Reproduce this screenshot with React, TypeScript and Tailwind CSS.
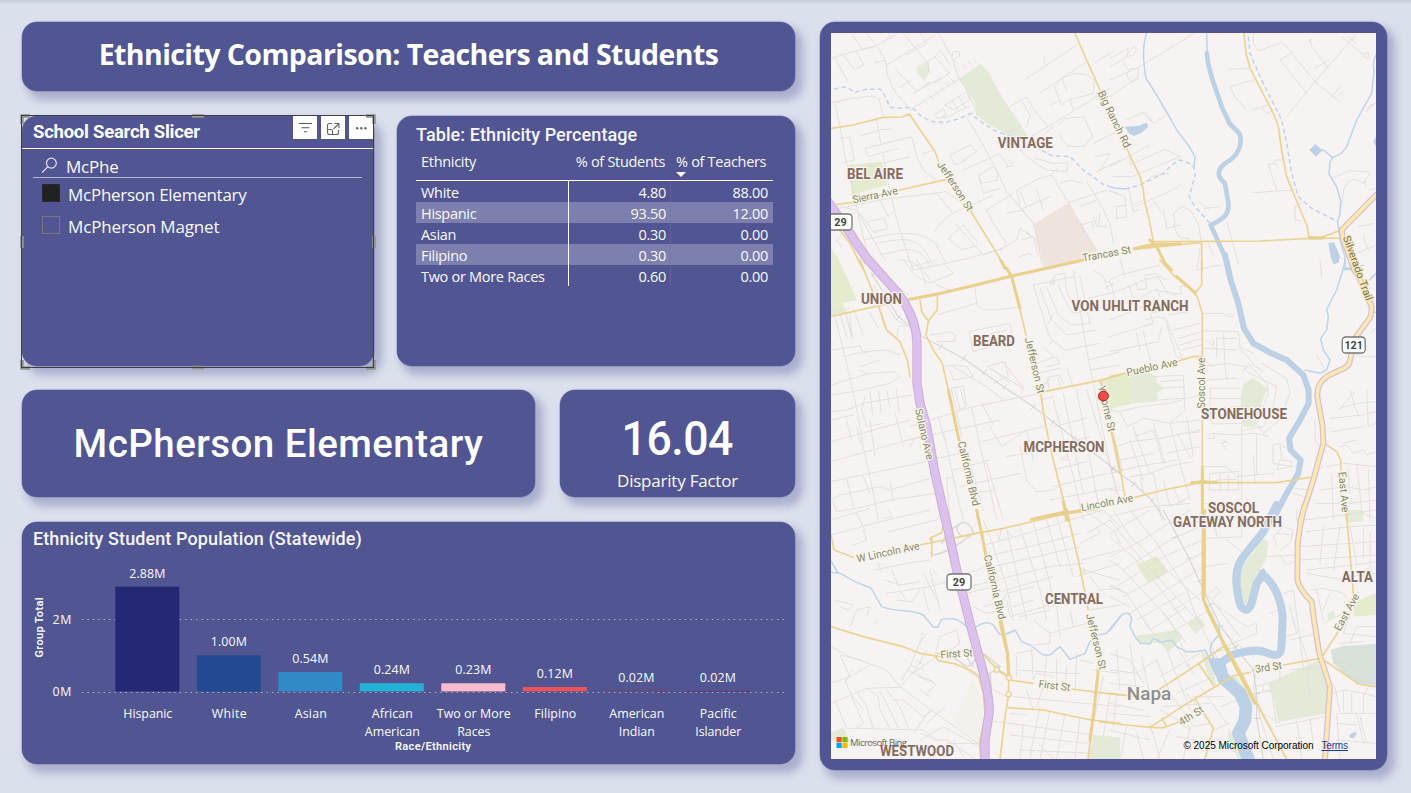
import React from "react";

type TileId = "a" | "b" | "c" | "d" | "e" | "f";
type Tiles = Partial<Record<TileId, string>>;

const ORIGIN: Record<TileId, [number, number]> = {
  a: [820, 10],
  b: [1110, 10],
  c: [820, 260],
  d: [1110, 260],
  e: [820, 510],
  f: [1110, 510],
};

function Layer({ tiles, fill = "none", stroke = "none", width = 0, dash, cap = "round" }: {
  tiles: Tiles; fill?: string; stroke?: string; width?: number; dash?: string; cap?: "round" | "butt";
}) {
  return (
    <g fill={fill} stroke={stroke} strokeWidth={width} strokeDasharray={dash} strokeLinecap={cap} strokeLinejoin="round">
      {(Object.keys(tiles) as TileId[]).map((k) => (
        <path key={k} d={tiles[k]} transform={`translate(${ORIGIN[k][0]} ${ORIGIN[k][1]}) scale(0.33333)`} />
      ))}
    </g>
  );
}

const parks: Tiles = {
  a: "M287 180L327 155L329 180L313 213Z M418 206L480 162L505 185L535 240L565 290L600 340L625 385L580 380L520 352L468 315L465 275L440 240Z M150 725L182 770L170 765Z",
  c: "M686 66L705 57V75H690Z",
  d: "M60 342L115 335L138 350L140 370L162 385L140 400L145 424L70 430Z M430 355L472 385L455 430L435 502L395 498L392 410L400 370Z M710 760L750 752L760 780H712Z",
  e: "M33 668L70 653L90 695L75 700L33 690Z M820 675L900 682V747H808Z M785 175h12v15h-12z",
  f: "M710 0H760V32L712 38Z M455 85L475 95L470 145L450 180L410 282L395 275L385 250L388 200L400 160L430 130Z M75 378L200 360L218 385L175 425L150 400L90 398Z M233 340L265 318L285 345L255 372Z M480 515L640 445L660 500L655 610L505 635Z M652 310L672 303L675 322L655 330Z M0 680L32 683L25 747H0Z M270 420L300 440L320 530L305 520L285 470Z M375 495L435 580L415 575L350 520Z M355 650L370 680L405 747H385L355 690Z M225 465L240 460L238 475Z",
};
const meadows: Tiles = {
  a: "M85 465L185 455L202 525L95 555Z M33 715L55 745L72 780H33Z",
  c: "M33 -35L75 40L110 120L68 130L75 158L33 168Z M840 360L900 345V440L870 448Z",
  d: "M-30 360L60 340L70 430L-5 447Z",
  f: "M78 165L140 137L175 185L115 220Z M730 320L735 275L798 250V315Z",
};
const campus: Tiles = { a: "M640 643L747 578L832 722L675 778Z", c: "M665 -5L830 -28L760 5L675 25Z" };
const cemetery: Tiles = { f: "M662 420L700 408L798 402V525L745 520L700 490L670 460Z" };
const industrial: Tiles = { e: "M462 500L485 580L495 650L480 700L402 635L405 620Z", f: "M745 180L798 165V222L745 210Z" };

const minor: Tiles = {
  a: `M33 145L100 125L168 108L230 72 M95 70L127 118L168 108 M72 137L103 178L132 165L108 123 M45 145L82 213 M140 70L172 110L195 150L203 195L222 240L270 300 M200 165L250 135L345 75 M205 70L215 85L200 85 M250 70L320 155L329 190 M300 70L322 100L260 135 M355 70L395 140L418 206L440 240L468 300L440 325L470 370L530 480L560 545L640 640L668 770
      M395 140L400 125L418 125L418 138L400 150L415 162 M270 300L350 250L418 206 M225 175L290 245L330 215 M288 175L345 140L388 190L340 220 M240 232L275 210 M280 250L360 205 M345 140L362 120L390 165 M290 280l14 12m4-25l14 12m4-23l14 12m4-24l14 12m3-24l12 12m4-24l14 12m3-24l12 12m3-24l12 12 M165 158L195 150
      M430 165l12 12m4-22l10 12m4-20l10 12 M345 315L370 295L380 315L355 325Z M375 285L440 245L450 270L400 300L375 285M395 270l20 30m0-42l22 35 M350 325L385 322L420 300L450 290
      M45 275L100 265L160 258L178 268L190 320 M33 278L62 276 M45 285L60 345L75 440L100 540L120 640L155 780 M58 385L90 382L103 450L62 460 M120 378L180 360L215 357 M135 415L275 380L290 440L310 480L350 510 M135 415L145 440L235 415 M190 435L205 520L225 610L265 740 M145 470L270 440 M170 330L182 400 M310 430L345 420
      M390 435L450 405L470 425L430 450 M390 435L405 465L440 450 M475 495L520 470L532 485V510L485 520L475 495L490 550L540 535 M430 480L540 430L565 470L555 475 M565 450c15 5 20 20 0 20L555 455
      M33 600L180 570L380 545L425 580 M180 570L205 620L220 605 M345 550L360 560L395 605 M140 635L190 625L205 655L160 665 M120 610L160 665L170 670 M33 585L110 600L160 690L195 750 M130 690L200 675C260 665 320 670 350 705L375 755 M180 735L250 720C290 715 315 730 330 770 M165 700L230 690C280 685 310 700 335 760 M265 740L280 780L355 765L445 745L550 715 M345 665C370 620 410 600 445 590L520 555 M385 685L430 645L470 695M385 685L425 720L470 707 M405 640L490 735L545 715 M500 600L580 550 M500 600L520 640L560 700
      M570 290L620 262L650 310L680 345 M600 265L630 315L620 350 M625 385L700 340L870 235 M550 375L600 350 M618 207L770 105 M670 140c10 5 0 15 5 22 M658 250L800 155 M703 230L725 205L765 190L800 195L822 210L820 250L745 270L725 285L703 230M725 205L740 240M750 270L760 300 M690 285L720 270 M715 345L735 325L790 320L818 380L790 410L745 408L730 395L718 370 M828 155L880 125 M820 400L900 360 M825 440L870 430L845 475L830 485L900 450
      M600 420L640 400L700 350 M600 420L640 455L680 480L740 485L745 458L700 460L645 445 M590 540L660 505L695 495L710 475 M695 495L745 578L830 725 M600 545L620 590L610 595L690 560M650 540L670 600 M720 520L750 510L790 520 M800 515L840 580L870 640L880 700 M745 578L860 540L900 555 M780 590L830 570 M785 645L830 630M820 620l10 30m-15-10l8 14 M840 610L835 650L860 650 M590 540L600 590L640 640 M600 655L650 690L660 720 M600 740L630 730L640 740M620 660l10 20M605 690L640 680L655 740 M545 715L590 690L600 655 M560 610L610 600 M40 640L70 670L50 690L65 715 M33 655L60 640`,
  b: `M0 170L45 145L70 110L80 118L70 135L50 140L55 115L0 145 M0 260L85 200V175L60 175L50 195L65 218L85 205 M0 210L80 175L250 72 M38 155L55 180 M0 470L120 405 M10 500L65 500L210 440L165 418L60 465V440 M50 330L105 305L130 340L165 318M100 310l30 30 M60 375L100 355 M0 540L45 560L50 620L20 625L20 590L50 585 M55 530L70 605L85 600 M65 585L100 570 M75 590L200 535L210 525 M100 520L130 498L175 490 M110 600L135 575L155 610 M160 600L170 655L210 645 M195 645L190 610L215 590L240 600L265 640L275 700 M190 645L205 680L240 688 M285 595L330 590 M265 575L300 600 M430 70L430 100L445 122L515 98L530 110L545 130L615 215L690 275 M355 178L417 175 M360 230L430 210M360 230L375 260L410 300 M425 300L475 285M455 295L470 310L490 300 M530 320L615 215L740 72 M510 150L550 125M510 150L590 250 M615 175L655 150 M595 95L605 88M600 90L605 110L655 175 M665 262L690 228M685 258L700 245 M695 80L760 135L775 125V145L760 140 M715 80L740 100 M430 548L550 540 M475 465L500 540M475 465L490 460L495 450L520 450M490 460L505 468 M350 635L385 760L380 765 M270 715L260 780L330 765 M295 700L310 735 M555 590V630L575 633M555 590L575 580 M665 505L700 490L720 482L770 485L780 490L760 520L730 507L715 515L700 540L695 590 M765 510L768 530M780 540L798 535 M775 295L798 280 M770 305L780 285L798 280 M715 740L798 705M760 680L775 720M745 650L790 640`,
  c: `M33 270L120 258L130 280L150 275 M33 155L90 145M60 160L80 230M75 150L95 235L90 160M100 145L130 225M150 160L175 205M80 170l20 60 M45 170L75 290L105 420L130 560L160 700L175 780 M70 290L130 275L200 270L240 285 M33 375L150 340L225 335L240 350L210 370L100 395L33 405 M120 320L180 300M140 340L120 330 M33 455L80 450L130 430L275 405 M33 480L100 465 M33 545L270 480 M150 395l8 70m18-72l8 70m17-72l8 50m20-55l8 70 M33 605L300 530 M135 410L125 450L140 500L190 490 M80 480l14 60 M33 665L80 655L340 600 M130 650l20 50M210 665l10 60 M33 720L60 705L180 680L210 690L330 655 M40 725L50 755L110 745L210 720L350 700 M33 780L150 745M80 655L100 740 M150 480L165 590M225 460L250 560M270 560L280 540 M110 500l15 60
      M140 0L160 15L200 60L265 105 M160 75L230 180L300 220 M235 200L265 195 M235 205L230 240 M330 225L390 215L405 225V245L350 245 M250 0L290 50L330 70L400 40L370 10 M350 75L390 90 M240 0C290 0 310 30 315 70M275 20L350 0M290 0L330 60 M365 160L470 130L465 80 M470 130C480 155 510 155 600 140 M355 165L380 155 M448 215L570 190L580 240L460 275ZM460 235L560 210 M370 320L400 315L440 320L460 350L400 360L390 330 M400 320L500 380L550 420 M500 320L610 385L605 400M500 320L550 305L610 385 M515 325L570 370 M555 305L565 350L520 370 M395 385L430 378L440 440L410 450ZM405 390l14 52m2-56l14 50 M270 500L330 480L460 440L660 400 M270 540L400 510L540 480 M355 470L380 560L410 700L430 780 M455 445L490 600L530 780 M410 460L425 530 M485 430L520 495 M330 600L420 580 M400 630L510 600 M420 680L600 640 M380 655L390 780M380 655L400 650M510 500L545 560L620 510 M485 545L670 500 M620 512L640 600 M600 560L620 660L650 695L700 690L735 670 M500 610L550 780 M450 610L490 750 M460 700L520 690 M560 590L620 580
      M640 75L760 50M640 75L690 235L735 270L840 250 M660 85L695 180L740 225L830 210 M680 80L715 165L755 195L810 190 M690 70L705 45L735 40L738 70M715 75L740 130L760 160L830 145 M735 75L755 130M850 60L880 75M855 85L880 70M820 30L850 50L865 90 M760 30L800 270L850 520L890 700 M780 50L810 190 M805 115L870 100 M700 160L685 190M670 260L700 290M685 255L700 240M650 310L710 290L720 310L680 320 M680 370L690 350L720 345L730 370M690 395L680 350M700 390L720 385L715 350 M650 340L720 325 M740 320L760 385 M805 300L900 275M810 330L900 315 M700 420L760 650L790 780 M730 400L790 700 M770 390L840 760 M700 500L800 475 M700 560L810 530 M720 600L740 590V570M730 600L745 600M700 630L800 605 M700 680L860 640 M690 720L900 680 M660 420L700 410 M800 390L900 720 M640 380L680 370`,
  d: `M0 60L30 45L150 15M30 0L45 50 M0 100L60 80L100 60L150 50L170 60 M0 140L80 120L130 90L200 100 M55 75L75 120M75 65L85 90L110 85L105 45L140 40L150 60L175 105 M0 230L130 190L120 160L190 145 M105 180L140 170L165 175L200 290L230 300 M0 180L100 140M170 180L215 290M175 165L235 155 M0 275L145 245L155 200 M190 210L270 190M205 235L275 215 M210 255L275 235M215 270L275 255 M185 105L215 100L210 80L240 75 M140 85L150 110 M0 60L25 150 M100 215L120 300 M80 220L90 270
      M280 160L340 160C365 180 385 165 355 160 M275 212L385 215L390 260L430 280 M280 265L380 270M340 220L345 310M320 235H380M320 235V290M290 240L310 260V240 M280 320L350 310L410 320M385 260L430 310L400 330L410 320 M280 360L380 355M280 300L310 320 M345 310L350 360
      M300 385H390M300 385V480L310 492L400 490M300 415H395 M300 445L400 440 M415 310L470 370L475 400L440 490L460 520M410 335L500 380L490 440L460 500L405 510 M455 310L530 355L540 400L510 480L460 520 M430 315L460 335 M290 525L310 520L315 535H290M310 520L370 525L440 520L475 530M340 540l10 10m-20 0l20-5m-10 10l5 12 M440 520V640M395 500V780
      M135 350L220 345L225 450L180 490L270 480 M150 365L215 360M145 385L225 380M150 420L220 415 M0 450L30 455L50 500L75 490L100 475L180 490 M30 455L90 440L180 430L270 405 M20 560L60 545L150 535L270 510 M30 600L130 580 M70 500L90 560L120 640L170 620L250 605 M75 530L130 510L160 610M180 490L215 630L240 720 M130 490L165 610M200 520L240 590 M60 540L100 660M0 480L40 640 M230 470L250 590 M230 520L270 515M170 580L270 560M0 640L80 620L200 600 M60 650L130 640L140 690M90 640L100 700 M0 690L40 690 M160 660L180 740L240 710 M0 770L120 740L240 730 M140 700L155 780 M190 680L210 730L225 720
      M275 620L350 620L380 650L490 640 M300 640L385 635V690L300 690ZM330 645V690M355 645V690M320 660L380 658 M430 585L435 670 M490 555L510 550L515 600L545 605L545 620L490 610ZM510 600L500 630L540 620 M280 730L380 740L395 780 M290 755L390 750 M520 560L545 570 M555 685L600 690M550 700L600 715
      M690 445L735 395M690 445L740 430L798 425M660 475L760 465L798 455M720 390L735 440L750 470 M770 390L775 500L798 490M665 515L760 500 M630 0L635 50 M620 285L640 320L640 340 M700 270L760 290H798 M780 220L798 205 M650 580L615 540V480 M690 560L710 555L730 580L760 570L770 585L798 575M700 550L740 540M650 620L700 610L798 620 M625 630L640 620 M630 690L710 680L760 690L798 680 M620 730L720 730L798 720 M665 640L670 780M740 610L755 750 M715 630L720 700M775 630L780 780`,
  e: `M33 75L160 40L330 0 M100 105L140 90L130 60M110 10L135 60M205 0L215 15 M185 25L220 20 M205 65L350 30M350 30L370 0 M165 180L260 160L330 150 M185 185L175 160M195 210L240 225L300 215 M200 250L330 230L400 210 M230 270L275 275L300 240M240 245L260 270 M310 190L350 270 M330 180L360 300 M215 180L235 230 M310 240L325 300 M340 180L350 195 M45 270L100 285L85 300L60 290 M90 350L110 300L150 290L140 320 M165 340L175 330M33 410L90 440L200 480L240 530L340 605L480 705 M60 435L120 450 M60 435L90 500L75 510L130 640L110 655L310 660L350 690L300 670 M33 520L90 500L150 465M95 480L75 520M33 580L140 535L240 532L290 475L320 420M140 535L175 560L180 600L210 655 M110 545L140 590L160 655 M90 550L130 600 M45 570L80 655L110 655 M180 545L200 580L235 655 M220 570L250 570L310 620L340 600M200 540L240 590L265 655 M260 480L340 515M270 465L310 480M285 450L310 465M295 500L345 520 M310 370L270 470L245 510M300 375l10-10M320 370L300 400 M320 550L350 520M350 440L280 490 M345 435L360 380L410 360 M280 670L330 600 M300 540L330 560 M375 590L320 640 M300 690L370 650L470 705M345 690L380 690L470 750 M400 690L430 740M380 700H480
      M490 30L510 80L560 230L580 330 M560 60L590 190L620 330M600 50L660 240L680 330 M640 40L690 220L700 290 M680 30L720 170 M710 20L760 200 M495 105L620 70L750 30 M520 135L670 100L780 70 M520 170L780 110 M440 190L500 170M450 230L690 170L790 160 M530 70L540 90M560 60l15 20M545 55L535 95 M540 245L700 200 M440 250L540 225M460 290L500 310L540 300M490 290L540 275 M545 280L560 250L640 230 M560 270L570 320L690 285M580 290L640 270M600 320L690 300 M640 330L690 370L690 400L640 405M750 30L850 0L900 50M790 0L880 60L900 100 M800 70L870 30M780 100L840 70L830 50M790 180L900 210 M770 200L900 160M785 150L900 120M810 200L840 240L900 235 M810 300L900 285 M690 370L800 340 M710 290L720 380M750 300L760 350
      M590 430L640 420M590 440V500M635 420L640 510L650 490L700 500M680 440L670 530M710 445V540M740 470L735 545M770 430L765 545 M590 480L740 490L780 490M820 480L900 490M580 560L900 590M570 640L820 675 M570 675L800 700 M600 720L820 730 M660 590L630 740M690 600L660 747M735 610L710 747M780 620L765 747 M620 540L640 600M670 530L650 590M570 610L620 615M610 650L600 747M780 450L820 460M850 500L820 640L800 747M870 550L850 680M890 550L880 650 M655 700L700 747 M520 540L560 560M520 635L570 640 M440 480L500 520M410 360L420 400L380 430`,
  f: `M0 30L80 130L160 220L280 350 M0 80L100 170L190 290L230 340 M60 0L140 100L230 240L250 300 M10 0L60 80L175 185L270 270 M0 150L40 180L180 330L230 440 M0 230L50 250L120 360 M0 70L120 0 M0 140L80 100L240 0 M40 180L180 90L270 50 M20 230L160 140L280 90 M40 260L175 185L275 130 M60 310L200 220L280 170M0 225L50 250 M80 330L220 250M120 360L230 290 M130 190L145 170L160 180L145 205Z M0 260L60 290 M190 300L290 240 M160 380L300 300L330 360M250 300L330 460L350 500 M160 310L230 400M110 340L150 400 M320 230L330 245L310 265 M310 280L410 350L440 340L440 370L320 420M330 350L380 400L430 440 M300 250L320 230 M285 170L350 160 M285 20L395 20V80L290 85M310 0L320 80 M350 90L400 130 M290 250L390 380 M475 140L550 135M500 110L490 80L520 50L550 60L540 100L510 120M555 90L560 150L530 165L510 135M500 70L550 75 M520 250L550 240L580 470 M540 290L560 370L530 380 M480 310L525 290 M570 380L600 470 M540 390L620 370 M580 30L700 15L798 0 M590 65L720 50L798 45 M570 110L798 95 M570 150L798 135 M590 180L730 165 M590 190L700 210 M600 240L640 235L700 250L730 290L700 370 M560 0V30 M690 50L670 180M720 50L740 160M760 50V145 M640 50L630 160 M620 240L640 330M660 250L640 300M640 340L700 310 M760 10L798 25M780 70V180 M735 165L798 155M720 200L798 190 M700 370L798 380 M690 400L760 395M720 400L740 350L798 350
      M440 480L430 530L450 620L490 747 M430 530L510 515V480 M440 550L480 540M480 515L500 650M490 660L460 620M440 570L480 650 M460 530c0-20 20-20 20 0v15h-20z M540 480L640 470 M590 460L600 560 M440 600L510 640 M500 650L640 620 M560 630L575 747M600 625L610 700 M675 530L690 610H798M670 550L700 540L760 550L798 560M725 550V610M760 550V610 M680 610L690 747M740 610L760 700M680 640L740 645M680 690L798 700M750 620L770 700 M700 540V600M760 560L780 520 M680 430L740 500M700 420L760 510M720 410L780 500M670 450L720 430M680 470L780 440M740 410L798 460M700 490L798 450
      M0 430L60 450L100 520M0 480L80 490L140 450M0 520L100 530 M20 420L30 540M60 400L80 550 M95 440L120 560 M140 450L190 570M200 410L250 490 M170 420L240 600 M150 500L270 430 M200 550L310 500 M120 640L150 747M180 660L140 747 M150 600L240 650L220 747M160 590L300 580 M190 560L250 650L300 640 M230 550L310 650 M270 530L350 640M250 560L340 560 M210 640L240 660V650M310 660L360 640 M200 680L300 700M0 580L100 600M0 610L120 620M80 670L100 747M0 660L120 690M50 650L30 747 M300 430L380 410M340 460L380 410M330 590L380 570`,
};

const stream: Tiles = {
  b: "M110 70C95 110 100 160 108 205L140 255L175 315L200 360L238 410L255 440L252 470 M290 70L292 140 M798 135C780 165 798 170 790 200L785 250L740 330L710 410L695 430L668 443L660 455L657 492L680 530L692 570L690 610L683 635L690 690L705 740V780L700 775L725 780 M625 425L640 420L668 443 M703 775H740L760 765",
  d: "M705 0L700 25L680 90L650 148L655 170L650 210L632 235L640 270L660 300L650 330L630 340L585 330 M700 25L720 26M778 60L798 40",
  e: "M33 187L60 190L110 217L153 234L185 290C240 310 270 295 310 315L340 352H353L365 328C390 325 410 320 440 350 M470 350C490 335 510 335 520 345L538 372C560 377 575 365 585 360L605 395L630 405L670 435H690L720 410L750 448L795 430L810 395L835 375L860 370L900 320 M33 153L55 190",
  f: "M0 362L35 315C50 305 60 310 65 325L60 350L75 380L90 400L120 402L130 385L155 397L185 390L200 410L230 425H255L285 420L300 445M325 345L330 370L305 400L300 420L312 445",
};
const intermittent: Tiles = {
  a: "M42 237L78 230L105 247L140 238L180 237L195 258L210 292L235 295L275 292L300 315L330 334L375 338L420 325L450 310L490 340L530 365L600 387L650 412L695 437L750 440L790 480L850 523L885 535L930 537",
  b: "M0 532L45 537L90 525L160 490L185 465L210 450L238 460L252 472L255 495L238 560L255 590L300 640 M415 80L420 130L450 200L490 280L515 330L530 400L545 490L565 560L605 595L683 635",
};
const riverUpper: Tiles = {
  b: "M290 130C295 190 320 240 335 290L360 342L388 370C400 400 385 440 345 460C320 480 320 500 345 520L355 580C358 610 345 625 302 645L345 740L355 780",
};
const riverMiddle: Tiles = {
  d: "M345 -15L362 60L385 130L402 205L430 250L480 278L530 300L580 345L596 390L596 430L570 480L537 535L542 570L572 600L565 640L530 700L488 780",
};
const riverLower: Tiles = {
  f: "M500 -15L460 65L400 140C375 170 375 210 385 260C390 305 415 310 425 280L440 220L460 195C490 220 512 260 518 320L515 400C515 440 500 440 470 428C440 415 400 425 365 435L325 465L330 490L385 550L412 590L405 630L385 670L415 747",
};
const riverMouth: Tiles = { f: "M325 465L340 505L390 550L408 590L405 630L385 670L415 747" };
const ponds: Tiles = {
  b: "M45 350L85 348L110 338L115 350L95 368L72 378L55 368Z M598 420L615 402L637 420L618 440Z M655 700L672 697L690 740L685 758L670 762L662 740Z M798 380L790 395L798 410Z",
  d: "M665 0H687L675 12Z",
  f: "M295 445H345L350 480L315 495L303 470Z M718 675L735 665L740 672L730 685L720 683Z M450 180L462 175L470 190L460 210L440 200Z",
};

const yellow: Tiles = {
  a: "M33 355L100 345L190 322L245 321L268 312L345 425L355 452 M268 312L262 317 M50 583L100 577L240 540L380 508 M450 600L555 770 M765 70L780 105L840 240 M55 655L90 700L130 780",
  b: "M50 415L90 500L100 540L103 570L120 640L130 695L135 705M402 70L408 130L420 175L490 310L505 350L515 420L530 500L565 585L592 650L597 683 M130 695H210L450 693L600 685L695 684 M597 680L630 683L695 660 M70 715L130 700L210 702M70 718L130 712L275 697M275 697V780",
  c: "M33 170L110 152L265 118 M120 0L160 100L180 150L200 210L240 245L262 300L270 350 M300 120L305 155L325 183L352 150V100 M325 183L318 225L340 270L367 310L385 390 M540 0L575 50L605 170L618 225 M663 403L672 470L690 560L715 660L737 745L745 780 M672 395L835 362L900 345M840 362L848 385 M875 520L885 570L900 640 M775 753L740 758 M470 770L475 780M180 150L195 200",
  d: "M150 0L190 45L240 85L262 110L277 160V300 M275 0V75L255 100 M277 430V780 M275 290H250L205 303 M0 350L45 340 M0 500L20 570L45 710 M75 712L160 690L275 667L500 668L600 652 M240 670L275 662L320 668 M640 548L680 575L692 600V630 M708 760L710 780 M798 157L788 156",
  e: "M33 75L42 120L100 142M300 105L480 68L550 55L740 10L830 0 M335 80V140 M335 95L330 85L365 68L370 40M545 330L565 430L567 495L565 560L555 620L540 747 M33 350L130 380L250 410L300 430L360 440 M345 437L355 452L400 460L450 480L475 498L490 550L495 620L478 700L482 747 M490 435L530 475L565 500M530 480L565 500 M567 510L640 520M755 537L840 548L900 555M565 593L670 600L740 615L815 630L900 640 M740 0L775 150L805 300 M835 480L820 620L805 747",
  f: "M277 0V260L290 300L320 360L350 410L400 500L440 580L530 747 M285 0V260 M0 550L95 562M130 550L260 465L340 410 M-30 635L50 645L120 652L240 575L370 498L420 487M520 465L630 445M265 460L310 525 M120 652L160 653L205 637 M155 625L170 650 M255 565L310 655L285 747 M708 0L720 130L730 250M685 365L640 435M640 450L700 490L745 522L798 530",
};
const yellowThick: Tiles = {
  a: "M545 755L555 775",
  b: "M75 716L130 706L210 701 M120 690L140 710L165 760L185 780 M600 685L640 684",
  c: "M270 118L350 103L480 72L575 48L680 25L790 0M560 25L575 50L600 145 M385 390L400 460L417 540 M635 778L740 755 M730 725L740 780",
  d: "M200 50L255 98 M277 620V780 M245 668L320 667",
  e: "M470 0L485 70L497 135 M540 335L562 430L566 495 M710 15L790 0 M835 480L822 600L810 690M740 0L745 30",
  f: "M281 0V270L340 400L400 515L435 580",
};
const purple: Tiles = {
  a: "M22 573L85 662L113 705L146 752",
  c: "M143 -2L230 95L255 130Q290 190 291 250L291 370L300 430L320 500L345 640L378 785",
  e: "M367 -10L380 40L410 180L450 340L488 480Q512 580 507 610L495 690L495 750",
};
const highway: Tiles = {
  b: "M798 555L695 660L700 690L735 785",
  d: "M720 -8L755 70L785 140Q785 170 775 180L735 235L720 300Q720 320 690 330L650 350Q620 370 622 410L638 500L640 550L610 660L570 785",
  f: "M582 -10L570 50L563 100L562 210Q570 240 605 275L612 330L628 430L660 530L645 747",
};
const ramps: Tiles = {
  e: "M340 135C380 130 420 100 460 70C450 30 420 30 410 55C415 85 440 80 460 70 M365 100L385 65L420 40 M350 430C400 430 420 460 440 470C470 460 480 430 460 415C440 410 430 440 460 470 M490 430L540 470L510 490L480 500 M510 490L515 540",
};
const rail: Tiles = {
  c: "M155 40L235 170L310 232L430 295L550 380L640 440L900 640M275 210L240 120",
  d: "M0 620L70 670L125 720L165 780",
  f: "M160 0L235 140L280 240L330 345L375 410L430 480L440 550L440 625L460 747",
};
const railTicks: Tiles = {
  c: "M155 50L165 38M230 180L243 165M355 268L368 253M425 302L438 287M487 343L500 328M548 388L560 373M633 448L645 434M693 495L704 481M755 543L768 530M875 632L888 618",
  d: "M3 632L15 620M65 680L76 666M120 728L132 714",
  f: "M188 85L203 78M230 148L244 142M262 215L277 210M295 288L308 280M325 353L340 347M370 417L383 406M425 483L440 475M432 552L448 550M433 625H448",
};

type Label = [string, number, number, number, number, number?];
const districts: Label[] = [
  ["VINTAGE", 1025.3, 142.7, 55, 13.8], ["BEL AIRE", 875, 173.7, 56, 13.8], ["UNION", 881.5, 299.2, 41, 13.8],
  ["BEARD", 994, 341.2, 42, 13.8], ["VON UHLIT RANCH", 1130, 306, 117, 13.8], ["MCPHERSON", 1064, 447.2, 81, 13.8],
  ["STONEHOUSE", 1244, 414, 86, 13.8], ["SOSCOL", 1233.5, 508, 51, 13.8], ["GATEWAY NORTH", 1227.5, 522, 109, 13.8],
  ["CENTRAL", 1074, 599.2, 58, 13.8], ["WESTWOOD", 917, 751.5, 74, 13.8], ["ALTA", 1357.3, 577.3, 31, 13.8],
];
const streets: Label[] = [
  ["Sierra Ave", 875, 195, 46, 10.6, -12], ["Jefferson St", 955.5, 186, 57, 10.6, 57], ["Big Ranch Rd", 1114.5, 119, 62, 10.6, 64],
  ["Trancas St", 1106.5, 253.5, 49, 10.6, -10], ["Jefferson St", 1035, 365.5, 57, 10.6, 77], ["Solano Ave", 924.5, 434, 52, 10.6, 77],
  ["California Blvd", 969, 473.5, 66, 10.6, 77], ["California Blvd", 995, 587, 66, 10.6, 77], ["Yajome St", 1107, 408.5, 47, 10.6, 77],
  ["Pueblo Ave", 1152, 367, 52, 10.6, -12], ["Soscol Ave", 1201.5, 383, 51, 10.6, -90], ["Lincoln Ave", 1107, 502.5, 53, 10.6, -11],
  ["W Lincoln Ave", 888, 552, 64, 10.6, -12], ["First St", 956.5, 653.5, 32, 10.6, -4], ["First St", 1054.5, 685.5, 32, 10.6, 7],
  ["Jefferson St", 1096.5, 641.5, 57, 10.6, 76], ["3rd St", 1268.5, 667, 27, 10.6, -8], ["4th St", 1191, 715.5, 27, 10.6, -32],
  ["East Ave", 1344, 492, 41, 10.6, 85], ["East Ave", 1346.5, 612, 41, 10.6, -61],
];
const trail: Label = ["Silverado Trail", 1358, 268, 68, 10.6, 70];

function MapLabel({ l, color, weight, halo }: { l: Label; color: string; weight: number; halo: string }) {
  const [t, x, y, w, size, rot = 0] = l;
  return (
    <text x={x} y={y} dy="0.36em" textAnchor="middle" textLength={w} lengthAdjust="spacingAndGlyphs" fontSize={size} fontWeight={weight} fill={color}
      stroke={halo} strokeWidth={2.4} strokeLinejoin="round" paintOrder="stroke" transform={`rotate(${rot} ${x} ${y})`}>
      {t}
    </text>
  );
}

function Shield({ x, y, n, w }: { x: number; y: number; n: string; w: number }) {
  return (
    <g>
      <rect x={x - w / 2} y={y - 8} width={w} height={16} rx={3.5} fill="#fff" stroke="#777" strokeWidth={1.3} />
      <text x={x} y={y + 3.8} textAnchor="middle" fontSize={10.8} fontWeight={700} fill="#444">{n}</text>
    </g>
  );
}

function CityMap() {
  return (
    <svg viewBox="831 33 545 726" className="block h-[726px] w-[545px] bg-[#f7f3f2] font-[Roboto,sans-serif]">
      <Layer tiles={industrial} fill="#f4f0ec" />
      <Layer tiles={campus} fill="#efe4dd" />
      <Layer tiles={parks} fill="#e3ead8" />
      <Layer tiles={meadows} fill="#e5ebcd" />
      <Layer tiles={cemetery} fill="#d6e1da" />
      <Layer tiles={minor} stroke="#e4e0db" width={3} />
      <Layer tiles={ramps} stroke="#dddad6" width={5} />
      <Layer tiles={rail} stroke="#d6d8d8" width={3.5} />
      <Layer tiles={railTicks} stroke="#d0d3d4" width={3} />
      <Layer tiles={stream} stroke="#bdd5ea" width={4.5} />
      <Layer tiles={intermittent} stroke="#bdd5ec" width={4.5} dash="14 9" cap="butt" />
      <Layer tiles={riverUpper} stroke="#bcd1e5" width={14} />
      <Layer tiles={riverMiddle} stroke="#bcd1e5" width={18} />
      <Layer tiles={riverLower} stroke="#bcd1e5" width={24} />
      <Layer tiles={riverMouth} stroke="#bcd1e5" width={38} />
      <Layer tiles={ponds} fill="#bcd1e5" />
      <Layer tiles={yellow} stroke="#ebd394" width={5} />
      <Layer tiles={yellowThick} stroke="#e9d08d" width={9} />
      <Layer tiles={purple} stroke="#c9b0d8" width={28} />
      <Layer tiles={purple} stroke="#dcc1ed" width={22} />
      <Layer tiles={highway} stroke="#d8bfd2" width={18} />
      <Layer tiles={highway} stroke="#fbe9ae" width={10.5} />
      <Layer tiles={{ e: "M530 471a8 8 0 1 0 .1 0M567 495a8 8 0 1 0 .1 0M566 545a8 8 0 1 0 .1 0" }} stroke="#e9d08d" fill="#f7f3f2" width={4} />
      {streets.map((l, i) => <MapLabel key={i} l={l} color="#85847a" weight={400} halo="#f9f8e2" />)}
      <MapLabel l={trail} color="#77735f" weight={400} halo="#f8eab8" />
      {districts.map((l) => <MapLabel key={l[0]} l={l} color="#866c5e" weight={700} halo="#f8f4f3" />)}
      <text x={1149} y={700} textAnchor="middle" textLength={44.5} lengthAdjust="spacingAndGlyphs" fontSize={19.2} fontWeight={500} fill="#8f8d8b" stroke="#faf7f5" strokeWidth={2} paintOrder="stroke">Napa</text>
      <Shield x={840.5} y={222} n="29" w={23} />
      <Shield x={959} y={582} n="29" w={24} />
      <Shield x={1353.7} y={345} n="121" w={23} />
      <circle cx={1103.4} cy={396} r={4.9} fill="#f24444" fillOpacity={0.94} stroke="#b81c22" strokeWidth={1} />
      <path d="M836.500 737h5.200v5.200h-5.200z" fill="#f25022" />
      <path d="M842.400 737h5.200v5.200h-5.200z" fill="#7fba00" />
      <path d="M836.500 742.800h5.200v5.200h-5.200z" fill="#00a4ef" />
      <path d="M842.400 742.800h5.200v5.200h-5.200z" fill="#ffb900" />
      <text x={850} y={746} textLength={57} fontSize={9.5} fill="#5f5f5f" className="font-['Open_Sans',sans-serif]">Microsoft Bing</text>
      <g className="font-['Liberation_Sans',sans-serif]" fontSize={10}>
        <text x={1183.5} y={749} textLength={130} fill="#000">© 2025 Microsoft Corporation</text>
        <text x={1321.500} y={749} textLength={26.500} fill="#1a3aa0" textDecoration="underline">Terms</text>
      </g>
    </svg>
  );
}

const bars = [
  { lines: ["Hispanic"], value: "2.88M", top: 586.7, label: 578, color: "#252874", w: [49] },
  { lines: ["White"], value: "1.00M", top: 655.3, label: 646, color: "#234990", w: [35] },
  { lines: ["Asian"], value: "0.54M", top: 672, label: 663, color: "#2f8ac5", w: [32] },
  { lines: ["African", "American"], value: "0.24M", top: 683.2, label: 674, color: "#25b0d6", w: [41, 55] },
  { lines: ["Two or More", "Races"], value: "0.23M", top: 683.3, label: 674, color: "#fdbccd", w: [74, 33] },
  { lines: ["Filipino"], value: "0.12M", top: 687, label: 678, color: "#e95459", w: [42] },
  { lines: ["American", "Indian"], value: "0.02M", top: 690.6, label: 682, color: "#8d3f5c", w: [55, 36] },
  { lines: ["Pacific", "Islander"], value: "0.02M", top: 690.8, label: 682, color: "#742d4f", w: [37, 46] },
];

function PopulationChart() {
  return (
    <svg viewBox="22 552 773 212" className="block h-[212px] w-[773px] font-['Open_Sans',sans-serif]" fill="#fbfbfe" fontSize={12.4}>
      <path d="M82 619.500H784M82 692.500H784" stroke="#b0b2c8" strokeWidth={1} strokeDasharray="1.4 4.03" fill="none" />
      <text x={52.5} y={624} textLength={19}>2M</text>
      <text x={52.5} y={696} textLength={19}>0M</text>
      {bars.map((b, i) => {
        const cx = 147.3 + i * 81.5;
        return (
          <g key={i}>
            <rect x={cx - 32} y={b.top} width={64} height={691.4 - b.top} fill={b.color} />
            <text x={cx} y={b.label} textAnchor="middle" textLength={36}>{b.value}</text>
            {b.lines.map((t, j) => (
              <text key={t} x={cx + 0.5} y={718 + j * 18} textAnchor="middle" textLength={b.w[j]}>{t}</text>
            ))}
          </g>
        );
      })}
      <g className="font-[Roboto,sans-serif]" fontSize={11} fontWeight={600}>
        <text x={433} y={750} textAnchor="middle" textLength={76}>Race/Ethnicity</text>
        <text transform="translate(43 627.5) rotate(-90)" textAnchor="middle" textLength={60}>Group Total</text>
      </g>
    </svg>
  );
}

function Card({ className = "", children }: { className?: string; children: React.ReactNode }) {
  return (
    <section className={`rounded-[15px] bg-[#515592] shadow-[6px_7px_9px_2px_rgba(82,86,150,0.36),0_0_0_0.5px_rgba(130,132,180,0.8)] ${className}`}>
      {children}
    </section>
  );
}

const rows = [
  ["White", "4.80", "88.00"],
  ["Hispanic", "93.50", "12.00"],
  ["Asian", "0.30", "0.00"],
  ["Filipino", "0.30", "0.00"],
  ["Two or More Races", "0.60", "0.00"],
];

function Slicer() {
  return (
    <Card className="relative w-[352px]">
      <div className="flex h-[33px] items-start border-b border-white pr-px pl-[11px]">
        <h2 className="mt-1 flex-1 font-[Roboto,sans-serif] text-[18.5px] leading-6 font-bold tracking-[-0.25px] whitespace-nowrap text-white">School Search Slicer</h2>
        <div className="flex gap-1">
          <span className="h-[23px] w-6 bg-white">
            <svg viewBox="0 0 24 24" className="h-6 w-6" fill="none" stroke="#555" strokeWidth="1.1"><path d="M6 7.500h13M8.500 11.700h8M11 15.800h3" /></svg>
          </span>
          <span className="h-[23px] w-6 bg-white">
            <svg viewBox="0 0 24 24" className="h-6 w-6" fill="none" stroke="#666" strokeWidth="1.1"><path d="M11 7.500H8.500Q6.500 7.500 6.500 9.500V16.500Q6.500 18.500 8.500 18.500H15.500Q17.500 18.500 17.500 16.500V14M13.500 7.500H18V12M18 7.500L12.500 13M6.500 13.500H10Q11.500 13.500 11.500 15V18.500" /></svg>
          </span>
          <span className="h-[23px] w-6 bg-white">
            <svg viewBox="0 0 24 24" className="h-6 w-6" fill="#666"><circle cx="8.200" cy="12.300" r="1.200" /><circle cx="12.300" cy="12.300" r="1.200" /><circle cx="16.500" cy="12.300" r="1.200" /></svg>
          </span>
        </div>
      </div>
      <div className="mr-3 ml-[11px] flex h-[29px] items-center gap-2 border-b border-[#b4b6d2] pt-2 pl-2 text-[17px] tracking-[-0.2px] text-[#fafafe]">
        <svg viewBox="0 0 18 18" className="-mt-[3px] h-[17px] w-[17px]" fill="none" stroke="#e6e6f2" strokeWidth="1.300"><circle cx="11" cy="6.500" r="5.200" /><path d="M7.300 10.200L1 16.500" /></svg>
        <span>McPhe</span>
      </div>
      <div className="flex flex-col pl-5 text-[17px] tracking-[-0.26px] text-[#fafafe]">
        <div className="flex h-8 items-center gap-2"><span className="-mt-[3px] h-[18px] w-[18px] border border-[#292929] bg-[#212121]" /><span className="mt-0.5">McPherson Elementary</span></div>
        <div className="flex h-8 items-center gap-2"><span className="-mt-[3px] h-[18px] w-[18px] border border-[#77777b]" /><span className="mt-0.5 tracking-[-0.15px]">McPherson Magnet</span></div>
      </div>
      <svg viewBox="0 0 356 256" className="pointer-events-none absolute -top-[2px] -left-[2px] h-[256px] w-[356px]" fill="none">
        <path d="M2 10V2H10M346 2H354V10M2 246V254H10M346 254H354V246M172 2H184M172 253.500H184M2 122V134M354 122V134" stroke="#93938f" strokeWidth="3.500" />
        <rect x="1.500" y="1.500" width="352" height="252" stroke="#3d3d42" />
      </svg>
    </Card>
  );
}

function PercentageTable() {
  return (
    <Card className="w-[398px] pt-[7px] pl-[19px]">
      <h2 className="font-[Roboto,sans-serif] text-[18px] leading-6 font-medium tracking-[0.09px] text-[#f6f6fb]">Table: Ethnicity Percentage</h2>
      <div className="w-[357px] text-[14.5px] tracking-[-0.3px] text-[#fafafe]">
        <div className="flex h-[34px] border-b border-white">
          <div className="w-[152px] pt-[5px] pl-[5px] leading-5">Ethnicity</div>
          <div className="w-[102px] pt-[5px] pr-[5px] text-right leading-5 whitespace-nowrap">% of Students</div>
          <div className="flex flex-1 flex-col pt-[5px] pl-[6px] leading-5 whitespace-nowrap">
            <span>% of Teachers</span>
            <span className="h-0 w-0 border-x-[5px] border-t-[5px] border-x-transparent border-t-white" />
          </div>
        </div>
        {rows.map((r, i) => (
          <div key={r[0]} className={`flex h-[21px] leading-[22px] ${i % 2 ? "bg-[#7d7fae]" : ""}`}>
            <div className="w-[153px] border-r border-white pt-px pl-[5px]">{r[0]}</div>
            <div className="w-[102px] border-r border-[#6e71a6]/50 pt-px pr-1 text-right">{r[1]}</div>
            <div className="flex-1 pt-px pr-[5px] text-right">{r[2]}</div>
          </div>
        ))}
      </div>
    </Card>
  );
}

export default function App() {
  return (
    <main className="flex h-[793px] w-[1411px] gap-[25px] overflow-hidden bg-[#dae0ec] bg-[linear-gradient(#c8cdd9_0,#ccd2de_2px,#dae0ec_4px)] pt-[22px] pl-[22px] font-['Open_Sans',sans-serif]">
      <div className="flex w-[773px] flex-col">
        <Card className="flex h-[69px] items-center justify-center">
          <h1 className="-mt-1 text-[28.5px] leading-none font-bold tracking-[-0.57px] whitespace-nowrap text-white">Ethnicity Comparison: Teachers and Students</h1>
        </Card>
        <div className="mt-[25px] flex h-[250px] justify-between font-['Open_Sans',sans-serif]">
          <Slicer />
          <PercentageTable />
        </div>
        <div className="mt-6 flex h-[107px] justify-between">
          <Card className="flex w-[513px] items-center justify-center">
            <span className="font-[Roboto,sans-serif] text-[38.5px] font-medium tracking-[0.45px] whitespace-nowrap text-white">McPherson Elementary</span>
          </Card>
          <Card className="flex w-[235px] flex-col items-center">
            <span className="mt-[22px] scale-x-[0.91] font-[Roboto,sans-serif] text-[49px] leading-[54px] font-medium tracking-[-0.5px] text-white">16.04</span>
            <span className="mt-[3px] text-[17px] leading-6 tracking-[-0.22px] text-[#fafafe]">Disparity Factor</span>
          </Card>
        </div>
        <Card className="mt-[25px] h-[242px] pt-[5px]">
          <h2 className="h-[25px] pl-[11px] font-[Roboto,sans-serif] text-[18px] leading-6 font-medium tracking-[0.1px] text-[#f6f6fb]">Ethnicity Student Population (Statewide)</h2>
          <PopulationChart />
        </Card>
      </div>
      <Card className="h-[748px] w-[567px] pt-[11px] pl-[11px]">
        <CityMap />
      </Card>
    </main>
  );
}
